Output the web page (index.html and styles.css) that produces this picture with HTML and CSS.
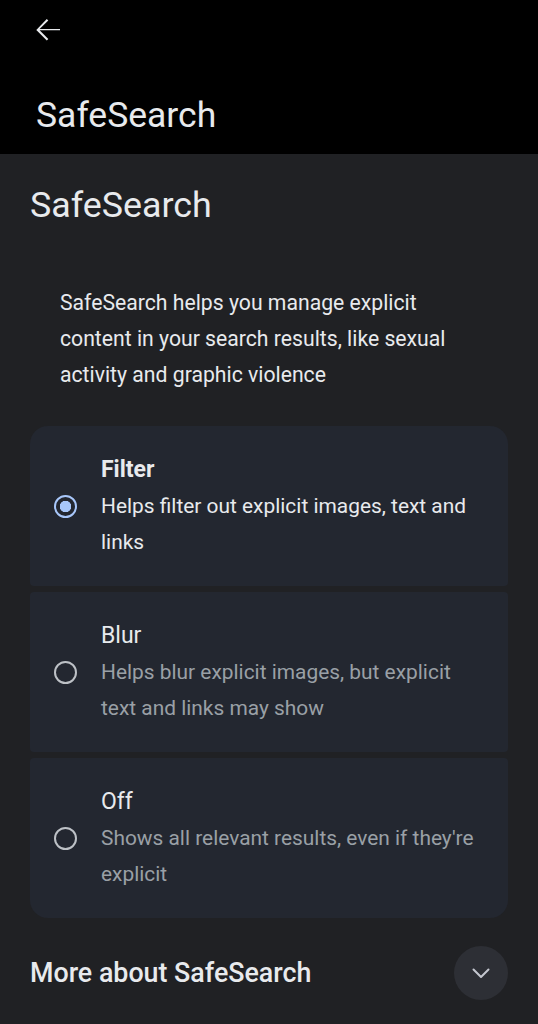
FILE: index.html
```html
<!DOCTYPE html>
<html lang="en">
<head>
    <meta charset="UTF-8">
    <title>SafeSearch</title>
    <meta name="viewport" content="width=device-width, initial-scale=1">
    <link rel="stylesheet" href="styles.css">
</head>
<body>
    <header class="topbar">
        <button class="back" aria-label="Back">
            <svg width="36" height="36" viewBox="0 0 24 24"><path d="M20 11.4H6.4l5.8-5.8-1-1L4.2 12l7 7 1-1-5.8-5.8H20z" fill="currentColor"/></svg>
        </button>
        <div class="topbar-title">SafeSearch</div>
    </header>
    <main class="content">
        <h1>SafeSearch</h1>
        <p class="intro">SafeSearch helps you manage explicit content in your search results, like sexual activity and graphic violence</p>
        <div class="options">
            <label class="option selected">
                <span class="radio"></span>
                <span class="option-text">
                    <span class="option-title">Filter</span>
                    <span class="option-desc">Helps filter out explicit images, text and links</span>
                </span>
            </label>
            <label class="option">
                <span class="radio"></span>
                <span class="option-text">
                    <span class="option-title">Blur</span>
                    <span class="option-desc">Helps blur explicit images, but explicit text and links may show</span>
                </span>
            </label>
            <label class="option">
                <span class="radio"></span>
                <span class="option-text">
                    <span class="option-title">Off</span>
                    <span class="option-desc">Shows all relevant results, even if they're explicit</span>
                </span>
            </label>
        </div>
        <div class="more">
            <span>More about SafeSearch</span>
            <button class="expand" aria-label="Expand">
                <svg width="24" height="24" viewBox="0 0 24 24"><path d="M4.5 8.5l7.5 7.5 7.5-7.5" fill="none" stroke="currentColor" stroke-width="2" stroke-linecap="round" stroke-linejoin="round"/></svg>
            </button>
        </div>
    </main>
</body>
</html>
```

FILE: styles.css
```css
body {
    margin: 0;
    background: #202124;
    color: #e8eaed;
    font-family: Roboto, "Noto Sans", sans-serif;
}
button { background: none; border: 0; color: inherit; padding: 0; }

.topbar { background: #000; height: 154px; padding: 0 36px; box-sizing: border-box; }
.back { display: block; margin-left: -6px; padding-top: 12px; height: 48px; color: #e8eaed; }
.topbar-title { font-size: 35.5px; margin-top: 47px; line-height: 40px; }

.content { padding: 0 30px; }
h1 { font-size: 35.8px; font-weight: 400; margin: 0; padding-top: 30px; line-height: 42px; }
.intro {
    font-size: 21.2px;
    line-height: 36px;
    margin: 59px 0 0;
    padding: 0 60px 0 30px;
}

.options { margin-top: 33px; display: flex; flex-direction: column; gap: 6px; }
.option {
    display: flex;
    align-items: center;
    background: #232730;
    border-radius: 4px;
    padding: 26px 25px 26px 24px;
}
.option:first-child { border-radius: 18px 18px 4px 4px; }
.option:last-child { border-radius: 4px 4px 18px 18px; }
.radio {
    width: 19px;
    height: 19px;
    border: 2.5px solid #bdc1c6;
    border-radius: 50%;
    flex: none;
    box-sizing: content-box;
    margin-right: 24px;
}
.selected .radio {
    border-color: #a8c7fa;
    background: radial-gradient(circle, #a8c7fa 0 5.5px, transparent 6px);
}
.option-text { display: flex; flex-direction: column; font-size: 20.9px; line-height: 36px; }
.option-title { color: #e8eaed; font-size: 23px; }
.option-desc { color: #9aa0a6; }
.selected .option-title { font-weight: 700; font-size: 23px; }
.selected .option-desc { color: #e8eaed; }

.more {
    display: flex;
    align-items: center;
    justify-content: space-between;
    margin-top: 28px;
    font-size: 26.8px;
    font-weight: 500;
}
.expand {
    width: 54px;
    height: 54px;
    border-radius: 50%;
    background: #2d2f35;
    display: flex;
    align-items: center;
    justify-content: center;
    color: #c4c7cf;
}
```
